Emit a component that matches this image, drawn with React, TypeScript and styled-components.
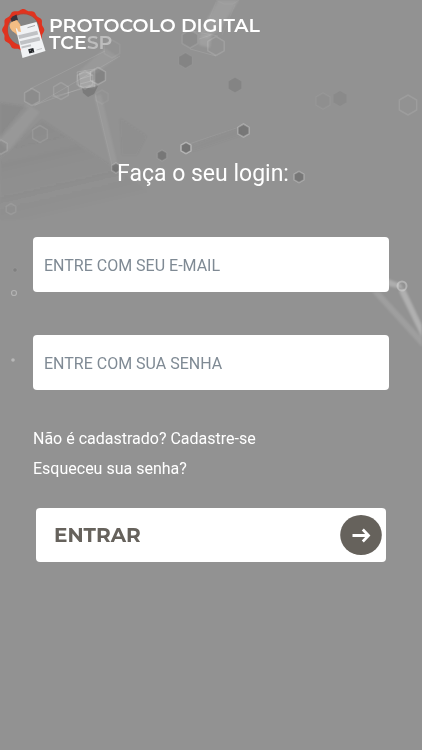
import React from "react";
import styled, { createGlobalStyle } from "styled-components";

const GlobalStyle = createGlobalStyle`
  *, *::before, *::after { box-sizing: border-box; }
  body {
    margin: 0;
    background: #929292;
    font-family: Roboto, "Liberation Sans", sans-serif;
    color: #ffffff;
  }
`;

const Page = styled.div`
  position: relative;
  min-height: 100vh;
  overflow: hidden;
  background: #929292;
`;

const Backdrop = styled.svg`
  position: absolute;
  inset: 0;
  width: 100%;
  height: 100%;
  pointer-events: none;
`;

const Content = styled.div`
  position: relative;
  display: flex;
  flex-direction: column;
`;

const Header = styled.header`
  display: flex;
  align-items: flex-start;
  gap: 1px;
  padding: 8px 0 0;
`;

const Emblem = styled.svg`
  flex: none;
  width: 48px;
  height: 52px;
`;

const Brand = styled.div`
  padding-top: 9px;
  font-family: Montserrat, Inter, sans-serif;
  font-size: 19px;
  font-weight: 600;
  line-height: 17px;
  white-space: nowrap;
`;

const BrandLine = styled.div``;

const Muted = styled.span`
  color: #bdbdbd;
`;

const Main = styled.main`
  padding: 97px 33px 0;
`;

const Title = styled.h1`
  margin: 0 0 46px;
  padding-right: 16px;
  font-size: 23px;
  font-weight: 400;
  line-height: 34px;
  text-align: center;
`;

const Form = styled.form`
  display: flex;
  flex-direction: column;
`;

const Field = styled.input`
  width: 100%;
  height: 55px;
  margin-bottom: 43px;
  padding: 2px 11px 0;
  border: 0;
  border-radius: 4px;
  background: #ffffff;
  color: #495057;
  font-family: inherit;
  font-size: 16px;

  &::placeholder {
    color: #7f8a94;
    opacity: 1;
  }
`;

const Links = styled.nav`
  display: flex;
  flex-direction: column;
  align-items: flex-start;
  margin-bottom: 24px;
  margin-top: -9px;
`;

const TextLink = styled.a`
  color: #ffffff;
  font-size: 16px;
  line-height: 30px;
  text-decoration: none;
`;

const Submit = styled.button`
  display: flex;
  align-items: center;
  justify-content: space-between;
  height: 54px;
  margin: 0 3px;
  padding: 0 4px 1px 18px;
  border: 0;
  border-radius: 4px;
  background: #ffffff;
  color: #66625c;
  font-family: Montserrat, Inter, sans-serif;
  font-size: 20px;
  font-weight: 700;
  cursor: pointer;
`;

const ArrowIcon = styled.svg`
  width: 42px;
  height: 40px;
`;

const sealPath = (() => {
  const points: string[] = [];
  for (let i = 0; i < 144; i++) {
    const a = (i / 144) * Math.PI * 2;
    const r = 20.3 + Math.cos(a * 12) * 0.8;
    points.push(`${(23.2 + Math.cos(a) * r).toFixed(2)} ${(22 + Math.sin(a) * r).toFixed(2)}`);
  }
  return `M${points.join("L")}Z`;
})();

interface HexProps {
  x: number;
  y: number;
  r: number;
  fill?: number;
  line?: number;
}

const Hex = ({ x, y, r, fill = 0, line = 0 }: HexProps) => {
  const pts = Array.from({ length: 6 }, (_, i) => {
    const a = (i * Math.PI) / 3 + Math.PI / 6;
    return `${(x + Math.cos(a) * r).toFixed(1)},${(y + Math.sin(a) * r).toFixed(1)}`;
  }).join(" ");
  return (
    <polygon
      points={pts}
      fill="#505050"
      fillOpacity={fill}
      stroke="#ffffff"
      strokeOpacity={line}
      strokeWidth={1.5}
      strokeLinejoin="round"
    />
  );
};

const nodes: HexProps[] = [
  { x: 32, y: 97, r: 8.5, fill: 0.08, line: 0.15 },
  { x: 61, y: 91, r: 8.5, line: 0.12 },
  { x: 98, y: 76, r: 8.5, fill: 0.2, line: 0.2 },
  { x: 85, y: 80, r: 9, line: 0.15 },
  { x: 112, y: 49, r: 9, line: 0.06 },
  { x: 102, y: 97, r: 7, line: 0.05 },
  { x: 40, y: 134, r: 8.5, line: 0.1 },
  { x: 1, y: 147, r: 7, fill: 0.12, line: 0.13 },
  { x: 11, y: 209, r: 5.5, line: 0.09 },
  { x: 190, y: 39, r: 9, fill: 0.08, line: 0.1 },
  { x: 216, y: 46, r: 9.5, line: 0.13 },
  { x: 185.5, y: 60.5, r: 7.5, fill: 0.22, line: 0.03 },
  { x: 235, y: 85, r: 7.5, fill: 0.2, line: 0.02 },
  { x: 323, y: 101, r: 8, fill: 0.04, line: 0.05 },
  { x: 340, y: 98.5, r: 7.5, fill: 0.12 },
  { x: 408, y: 105, r: 10, line: 0.1 },
  { x: 243.5, y: 130.5, r: 6.5, fill: 0.4, line: 0.27 },
  { x: 186, y: 148, r: 5.7, fill: 0.45, line: 0.38 },
  { x: 162, y: 155.5, r: 5.3, fill: 0.4, line: 0.1 },
  { x: 116, y: 168, r: 5, fill: 0.4, line: 0.18 },
  { x: 299, y: 177, r: 5.7, fill: 0.4, line: 0.25 },
];

const Molecules = () => (
  <Backdrop viewBox="0 0 422 750" preserveAspectRatio="xMinYMin slice" aria-hidden="true">
    <defs>
      <filter id="soft" x="-20%" y="-20%" width="140%" height="140%">
        <feGaussianBlur stdDeviation="1.2" />
      </filter>
      <linearGradient id="facet" gradientUnits="userSpaceOnUse" x1="40" y1="130" x2="60" y2="215">
        <stop offset="0" stopColor="#555" stopOpacity=".09" />
        <stop offset="1" stopColor="#555" stopOpacity="0" />
      </linearGradient>
    </defs>
    <g filter="url(#soft)">
      <path d="M0 103L30 107L0 140Z" fill="#555" opacity=".11" />
      <path d="M42 120L8 152L0 158V220H190L110 165Z" fill="url(#facet)" />
      <path d="M120 118L147 136L137 155H122Z" fill="#555" opacity=".04" />
      <path d="M27 104L40 112L8 151L-3 140Z" fill="#fff" opacity=".06" />
      <path d="M77 73L105 48L118 57L97 73Z" fill="#fff" opacity=".07" />
      <path d="M94 96L101 94L118 166L111 164Z" fill="#fff" opacity=".07" />
      <path d="M218 0H239L220 30L207 38L198 35Z" fill="#fff" opacity=".1" />
      <path d="M199 36L212 34L210 48L199 45Z" fill="#fff" opacity=".12" />
      <path d="M189 147L240 127L241 135L193 151Z" fill="#666" opacity=".06" />
      <path d="M372 292L422 347V338L380 292Z" fill="#fff" opacity=".12" />
      <path d="M388 279L401 284L403 289L388 286Z" fill="#fff" opacity=".25" />
      <path d="M399 291L405 289L422 325V338Z" fill="#fff" opacity=".28" />
    </g>
    <g fill="none" stroke="#fff" strokeOpacity=".1">
      <path d="M30 89L105 51M34 106L120 56M35 105L90 85M52 97L96 85" />
      <path d="M95 94L112 165M189 144L239 127" strokeOpacity=".07" />
      <path d="M192 31L218 36M190 49L216 56M199 39L211 35" />
      <path d="M216 0L224 4H233L239 0M216 2L204 32M235 5L222 35" strokeOpacity=".05" />
      <path d="M77 72L95 69V88L79 87ZM80 79L93 75M80 84L95 80" strokeOpacity=".15" />
    </g>
    <path d="M82 88L90 88L98 86L94 94L88 97L83 93Z" fill="#505050" opacity=".35" />
    <path d="M79 73L95 70V87L80 87Z" fill="#fff" opacity=".18" />
    {nodes.map((node) => (
      <Hex key={`${node.x}-${node.y}`} {...node} />
    ))}
    <g fill="none" stroke="#fff">
      <circle cx="402" cy="286" r="4.5" strokeWidth="2" strokeOpacity=".3" />
      <circle cx="14" cy="293" r="2.5" strokeWidth="1.2" strokeOpacity=".3" />
      <circle cx="15" cy="270" r="2" strokeOpacity=".07" fill="#555" fillOpacity=".3" />
    </g>
    <circle cx="13" cy="360" r="1.8" fill="#fff" opacity=".35" />
  </Backdrop>
);

const Logo = () => (
  <Emblem viewBox="0 0 48 52" aria-hidden="true">
    <path d={sealPath} fill="#e0331f" />
    <circle cx="23.5" cy="21.5" r="16.2" fill="#b9422f" />
    <circle cx="23.5" cy="21.8" r="15.6" fill="#858585" />
    <path d="M10.5 10.5Q12.5 8 16.5 6.5L18 12L12 15Z" fill="#38333b" />
    <path d="M11.5 14L17 12L20.5 17L22 26L17 27L10 20Z" fill="#efb477" />
    <path d="M15.5 19.5L36.5 14L45.5 43L22.5 50Z" fill="#f0f2f4" />
    <path d="M10.5 15L16 12.5L19.5 16L21 24L18.2 23.5L17 20.5L15 20L15.5 25L12 23L9.5 18Z" fill="#f3bd84" />
    <path d="M27.5 19.7L35 17.5" stroke="#a5a7aa" strokeWidth="1" />
    <path
      d="M18.5 28.2L37.5 23.8M19 30L38 25.6M20 34.2L39.5 29.7M20.5 36L40 31.5M21.5 39.5L31 37.3"
      stroke="#c0c2c5"
      strokeWidth="1.9"
    />
    <path d="M28.2 41.2L33.3 40L34.4 44.2L29.3 45.5Z" fill="#24272a" />
    <path d="M29.7 42.5L31 42.2M32.2 43.8L33 43.6" stroke="#c8c9cb" strokeWidth=".6" />
    <path d="M36.5 42L42 40.5" stroke="#b7babd" strokeWidth=".8" />
  </Emblem>
);

export default function App() {
  return (
    <Page>
      <GlobalStyle />
      <Molecules />
      <Content>
        <Header>
          <Logo />
          <Brand>
            <BrandLine>PROTOCOLO DIGITAL</BrandLine>
            <BrandLine>
              TCE<Muted>SP</Muted>
            </BrandLine>
          </Brand>
        </Header>
        <Main>
          <Title>Faça o seu login:</Title>
          <Form onSubmit={(event) => event.preventDefault()}>
            <Field type="email" name="email" aria-label="E-mail" placeholder="ENTRE COM SEU E-MAIL" />
            <Field type="password" name="senha" aria-label="Senha" placeholder="ENTRE COM SUA SENHA" />
            <Links>
              <TextLink href="#cadastro">Não é cadastrado? Cadastre-se</TextLink>
              <TextLink href="#senha">Esqueceu sua senha?</TextLink>
            </Links>
            <Submit type="submit">
              ENTRAR
              <ArrowIcon viewBox="0 0 42 40" aria-hidden="true">
                <ellipse cx="21" cy="20" rx="20.8" ry="20" fill="#66625c" />
                <path d="M12.5 20.5H28M22.8 14.5L28.5 20.5L22.8 26.5" fill="none" stroke="#fff" strokeWidth="2.8" />
              </ArrowIcon>
            </Submit>
          </Form>
        </Main>
      </Content>
    </Page>
  );
}
